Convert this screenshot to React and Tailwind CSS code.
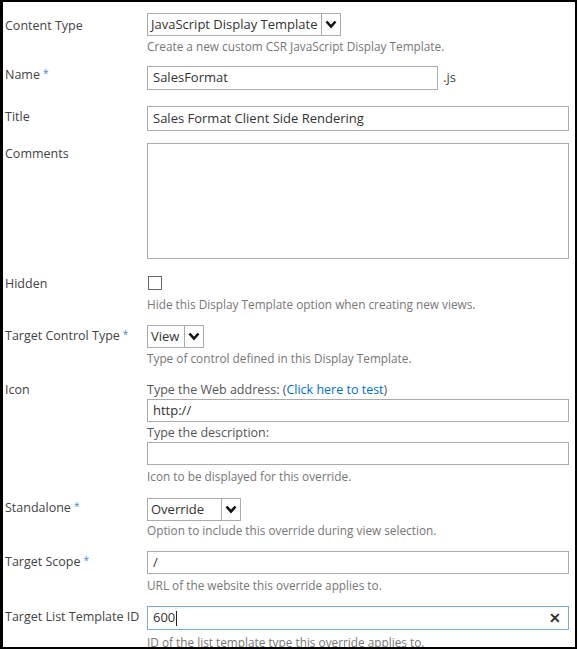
import React from 'react';

const font = { fontFamily: '"Open Sans", "Liberation Sans", sans-serif' };

const Star = () => <span className="text-[#3b8bd0] ml-[3px] text-[10px] relative top-[-2px]">*</span>;

const Chevron = () => (
  <svg width="12" height="9" viewBox="0 0 12 9">
    <path d="M1.5 1.5 L6 6.5 L10.5 1.5" fill="none" stroke="#111" strokeWidth="2.6" strokeLinejoin="miter" />
  </svg>
);

const Select = ({ value, width }) => (
  <div className={`flex items-stretch border border-[#ababab] bg-white h-[23px] ${width}`}>
    <span className="flex-1 flex items-center pl-[3px] text-[13px] text-[#333] whitespace-nowrap overflow-hidden">{value}</span>
    <span className="w-[19px] flex items-center justify-center border-l border-[#ababab] bg-white">
      <Chevron />
    </span>
  </div>
);

const Input = ({ value, h = 'h-[23px]', width = 'w-[422px]', children, className = 'border-[#ababab]' }) => (
  <div className={`relative flex items-center border bg-white ${className} ${h} ${width}`}>
    <span className="pl-[5px] text-[13px] text-[#333] whitespace-nowrap">{value}</span>
    {children}
  </div>
);

const Desc = ({ children, mt }) => (
  <div className={`text-[11.8px] leading-[15px] text-[#777] whitespace-nowrap ${mt}`}>{children}</div>
);

const Row = ({ label, star, mt, lpt = 'pt-0', children }) => (
  <div className={`flex ${mt}`}>
    <div className={`w-[144px] pl-[2px] text-[12.5px] leading-[15px] text-[#444] whitespace-nowrap ${lpt}`}>
      {label}
      {star && <Star />}
    </div>
    <div className="flex flex-col">{children}</div>
  </div>
);

export default function App() {
  return (
    <div style={font} className="w-[577px] h-[649px] border-2 border-l-[3px] border-black bg-white overflow-hidden pt-[11px] box-border">
      <Row label="Content Type" lpt="pt-[5px]">
        <Select value="JavaScript Display Template" width="w-[194px]" />
        <Desc mt="mt-[3px]">Create a new custom CSR JavaScript Display Template.</Desc>
      </Row>

      <Row label="Name" star mt="mt-[12px]" lpt="pt-[1px]">
        <div className="flex items-center">
          <Input value="SalesFormat" h="h-[24px]" width="w-[291px]" />
          <span className="ml-[5px] text-[13px] text-[#444]">.js</span>
        </div>
      </Row>

      <Row label="Title" mt="mt-[16px]" lpt="pt-[3px]">
        <Input value="Sales Format Client Side Rendering" h="h-[25px]" />
      </Row>

      <Row label="Comments" mt="mt-[12px]" lpt="pt-[3px]">
        <div className="w-[422px] h-[116px] border border-[#ababab] bg-white" />
      </Row>

      <Row label="Hidden" mt="mt-[17px]" lpt="pt-0">
        <div className="w-[14px] h-[14px] ml-[1px] border border-[#666] bg-white" />
        <Desc mt="mt-[7px]">Hide this Display Template option when creating new views.</Desc>
      </Row>

      <Row label="Target Control Type" star mt="mt-[13px]" lpt="pt-[3px]">
        <Select value="View" width="w-[57px]" />
        <Desc mt="mt-[3px]">Type of control defined in this Display Template.</Desc>
      </Row>

      <Row label="Icon" mt="mt-[16px]" lpt="pt-0">
        <div className="text-[12.5px] leading-[15px] text-[#555]">
          Type the Web address: (<span className="text-[#0072c6]">Click here to test</span>)
        </div>
        <div className="mt-[2px]">
          <Input value="http://" />
        </div>
        <div className="mt-[3px] text-[12.5px] leading-[15px] text-[#555]">Type the description:</div>
        <div className="mt-[2px]">
          <Input value="" />
        </div>
        <Desc mt="mt-[4px]">Icon to be displayed for this override.</Desc>
      </Row>

      <Row label="Standalone" star mt="mt-[14px]" lpt="pt-[2px]">
        <Select value="Override" width="w-[94px]" />
        <Desc mt="mt-[2px]">Option to include this override during view selection.</Desc>
      </Row>

      <Row label="Target Scope" star mt="mt-[13px]" lpt="pt-[3px]">
        <Input value="/" />
        <Desc mt="mt-[4px]">URL of the website this override applies to.</Desc>
      </Row>

      <Row label="Target List Template ID" mt="mt-[13px]" lpt="pt-[3px]">
        <Input value="600" h="h-[24px]" className="border-[#7aaad8]">
          <span className="w-[1px] h-[15px] bg-[#222] ml-[1px]" />
          <span className="absolute right-[7px] top-[4px] text-[14px] font-bold text-[#333] leading-[14px]">✕</span>
        </Input>
        <Desc mt="mt-[5px]">ID of the list template type this override applies to.</Desc>
      </Row>
    </div>
  );
}
